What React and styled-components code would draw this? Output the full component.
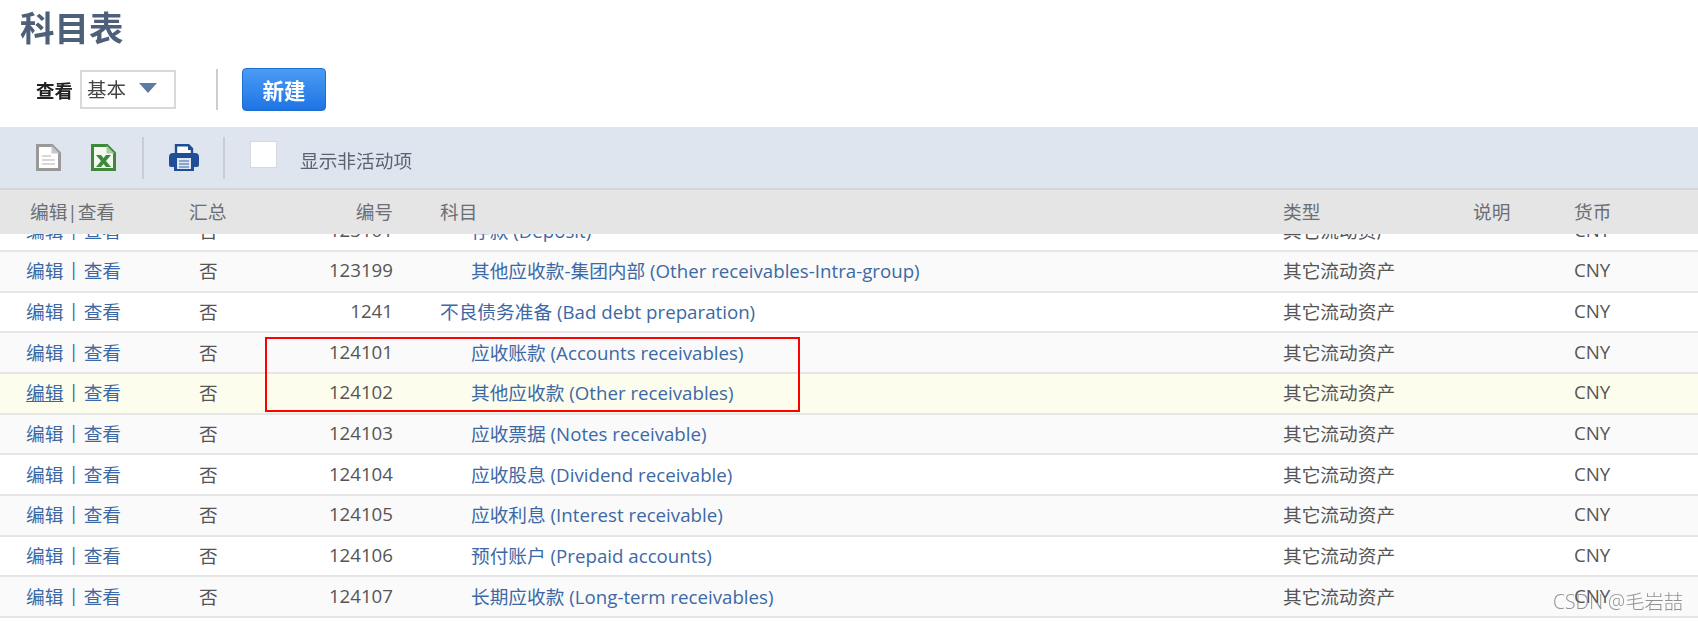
import React from 'react';
import styled, { createGlobalStyle } from 'styled-components';

const GlobalStyle = createGlobalStyle`
  html, body {
    margin: 0;
    padding: 0;
    background: #fff;
  }
  body {
    font-family: "Open Sans", "Noto Sans CJK SC", sans-serif;
    overflow: hidden;
  }
`;

const rows = [
  { num: '123101', name: '存款 (Deposit)', indent: true },
  { num: '123199', name: '其他应收款-集团内部 (Other receivables-Intra-group)', indent: true },
  { num: '1241', name: '不良债务准备 (Bad debt preparation)' },
  { num: '124101', name: '应收账款 (Accounts receivables)', indent: true },
  { num: '124102', name: '其他应收款 (Other receivables)', indent: true, hovered: true },
  { num: '124103', name: '应收票据 (Notes receivable)', indent: true },
  { num: '124104', name: '应收股息 (Dividend receivable)', indent: true },
  { num: '124105', name: '应收利息 (Interest receivable)', indent: true },
  { num: '124106', name: '预付账户 (Prepaid accounts)', indent: true },
  { num: '124107', name: '长期应收款 (Long-term receivables)', indent: true },
];

const DocIcon = () => (
  <svg width="25" height="27" viewBox="0 0 25 27">
    <path d="M1.500 1.500h14.500l7.500 7.500v16.500h-22z" fill="#fff" stroke="#999" strokeWidth="3" />
    <path d="M15.500 1.500v8h8z" fill="#c8c8c8" />
    <path d="M6 12h9M6 16h13M6 20h13" stroke="#ccc" strokeWidth="1.600" />
  </svg>
);

const ExcelIcon = () => (
  <svg width="25" height="27" viewBox="0 0 25 27">
    <path d="M1.500 1.500h14.500l7.500 7.500v16.500h-22z" fill="#f4f8f0" stroke="#3e8a3a" strokeWidth="3" />
    <path d="M15.500 1.500v8h8z" fill="#a5cfa0" />
    <path d="M5 11h5l2.500 3 2.500-3h5l-5 6 5 6h-5l-2.500-3-2.500 3h-5l5-6z" fill="#3e8a3a" />
  </svg>
);

const PrintIcon = () => (
  <svg width="30" height="27" viewBox="0 0 30 27">
    <path d="M7 1.200h12.500l3.500 3.500V12H7z" fill="#fff" stroke="#1f4e96" strokeWidth="2.400" />
    <path d="M19 1v5h5z" fill="#1f4e96" />
    <path d="M4 9h22a4 4 0 0 1 4 4v8a2 2 0 0 1-2 2h-3v4H5v-4H2a2 2 0 0 1-2-2v-8a4 4 0 0 1 4-4z" fill="#1f4e96" />
    <path d="M8 14h14v11H8z" fill="#dfe6f2" />
    <path d="M10 17h10M10 20h10M10 23h10" stroke="#6f8fc2" strokeWidth="1.300" />
  </svg>
);

const Page = styled.div`
  position: relative;
  width: 1698px;
  height: 621px;
  overflow: hidden;
`;

const Content = styled.div`
  height: 100%;
  display: flex;
  flex-direction: column;
  filter: blur(0.4px);
`;

const Title = styled.h1`
  margin: 0;
  padding: 6px 0 0 20px;
  height: 54px;
  box-sizing: border-box;
  font-size: 34.5px;
  line-height: 44px;
  font-weight: 700;
  color: #4d5f79;
`;

const Actions = styled.div`
  display: flex;
  align-items: center;
  height: 73px;
  box-sizing: border-box;
  padding: 0 0 2px 36px;
`;

const ViewLabel = styled.span`
  font-size: 18.5px;
  font-weight: 700;
  color: #222;
  margin-right: 7px;
`;

const Select = styled.div`
  width: 96px;
  height: 39px;
  box-sizing: border-box;
  border: 2px solid #d9d9d9;
  display: flex;
  align-items: center;
  justify-content: space-between;
  padding: 0 17px 3px 5px;
  font-size: 19.5px;
  color: #444;
`;

const Caret = styled.i`
  width: 0;
  height: 0;
  border-left: 9px solid transparent;
  border-right: 9px solid transparent;
  border-top: 10px solid #5d7aa0;
`;

const Divider = styled.span`
  width: 2px;
  height: ${p => p.$h}px;
  background: #c9ced3;
  margin: ${p => p.$m};
`;

const NewButton = styled.button`
  width: 84px;
  height: 43px;
  border: 1px solid #1a6fd0;
  border-radius: 4px;
  background: linear-gradient(#4a9cf5, #1f74e4);
  color: #fff;
  font-family: inherit;
  font-size: 21.5px;
  font-weight: 700;
  padding: 0;
`;

const Toolbar = styled.div`
  display: flex;
  align-items: center;
  height: 61px;
  background: #dfe5ef;
  padding-left: 36px;
`;

const IconSlot = styled.span`
  display: flex;
  margin-right: ${p => p.$mr}px;
`;

const Checkbox = styled.span`
  width: 27px;
  height: 27px;
  box-sizing: border-box;
  background: #fff;
  border: 1px solid #d5d8dc;
  margin: -6px 23px 0 0;
`;

const ToolbarLabel = styled.span`
  font-size: 18.7px;
  color: #5a6470;
  margin-top: 3px;
`;

const columns = `
  display: grid;
  grid-template-columns: 26px 163px 131px 73px 47px 843px 190px 101px 1fr;
  align-items: center;
`;

const HeaderRow = styled.div`
  ${columns}
  height: 46px;
  box-sizing: border-box;
  background: #e5e5e5;
  border-top: 2px solid #d3d4d6;
  padding-bottom: 4px;
  font-size: 18.7px;
  color: #6b6f74;
  position: relative;
  z-index: 1;
`;

const HeaderCell = styled.span`
  grid-column: ${p => p.$col};
  text-align: ${p => p.$right ? 'right' : 'left'};
  padding-left: ${p => p.$pl || 0}px;
`;

const Body = styled.div`
  flex: 1;
  overflow: hidden;
`;

const Rows = styled.div`
  margin-top: -22.5px;
`;

const Row = styled.div`
  ${columns}
  height: 40.67px;
  box-sizing: border-box;
  border-bottom: 2px solid #e6e6e6;
  padding-bottom: 3px;
  background: ${p => p.$bg};
  font-size: 18.7px;
  color: #555;
`;

const Links = styled.div`
  grid-column: 2;
  display: flex;
  gap: 5px;
  color: #3a6ca8;
`;

const TextLink = styled.a`
  color: #3c69a5;
  text-decoration: ${p => p.$underline ? 'underline' : 'none'};
`;

const Summary = styled.span`
  grid-column: 3;
  padding-left: 10px;
`;

const AccountNumber = styled.span`
  grid-column: 4;
  text-align: right;
`;

const Name = styled.a`
  grid-column: 6;
  color: #3c69a5;
  padding-left: ${p => p.$indent ? 31 : 0}px;
`;

const Type = styled.span`
  grid-column: 7;
`;

const Currency = styled.span`
  grid-column: 9;
`;

const Highlight = styled.div`
  position: absolute;
  left: 265px;
  top: 337px;
  width: 535px;
  height: 75px;
  box-sizing: border-box;
  border: 2px solid #f00;
  pointer-events: none;
`;

const Watermark = styled.div`
  position: absolute;
  right: 15px;
  bottom: 7px;
  font-size: 19.3px;
  font-weight: 300;
  line-height: 24px;
  color: rgba(110, 110, 110, 0.75);
`;

export default function App() {
  return (
    <Page>
      <GlobalStyle />
      <Content>
        <Title>科目表</Title>
        <Actions>
          <ViewLabel>查看</ViewLabel>
          <Select>
            基本
            <Caret />
          </Select>
          <Divider $h={41} $m="0 24px 0 40px" />
          <NewButton>新建</NewButton>
        </Actions>
        <Toolbar>
          <IconSlot $mr={30}><DocIcon /></IconSlot>
          <IconSlot $mr={26}><ExcelIcon /></IconSlot>
          <Divider $h={42} $m="0 25px 0 0" />
          <IconSlot $mr={24}><PrintIcon /></IconSlot>
          <Divider $h={42} $m="0 25px 0 0" />
          <Checkbox />
          <ToolbarLabel>显示非活动项</ToolbarLabel>
        </Toolbar>
        <HeaderRow>
          <HeaderCell $col={2} $pl={4}>编辑|查看</HeaderCell>
          <HeaderCell $col={3}>汇总</HeaderCell>
          <HeaderCell $col={4} $right>编号</HeaderCell>
          <HeaderCell $col={6}>科目</HeaderCell>
          <HeaderCell $col={7}>类型</HeaderCell>
          <HeaderCell $col={8}>说明</HeaderCell>
          <HeaderCell $col={9}>货币</HeaderCell>
        </HeaderRow>
        <Body>
          <Rows>
            {rows.map((row, i) => (
              <Row key={row.num} $bg={row.hovered ? '#fdfdee' : i % 2 ? '#fafafa' : '#fff'}>
                <Links>
                  <TextLink $underline={row.hovered}>编辑</TextLink>
                  |
                  <TextLink>查看</TextLink>
                </Links>
                <Summary>否</Summary>
                <AccountNumber>{row.num}</AccountNumber>
                <Name $indent={row.indent}>{row.name}</Name>
                <Type>其它流动资产</Type>
                <Currency>CNY</Currency>
              </Row>
            ))}
          </Rows>
        </Body>
      </Content>
      <Highlight />
      <Watermark>CSDN @毛岩喆</Watermark>
    </Page>
  );
}
